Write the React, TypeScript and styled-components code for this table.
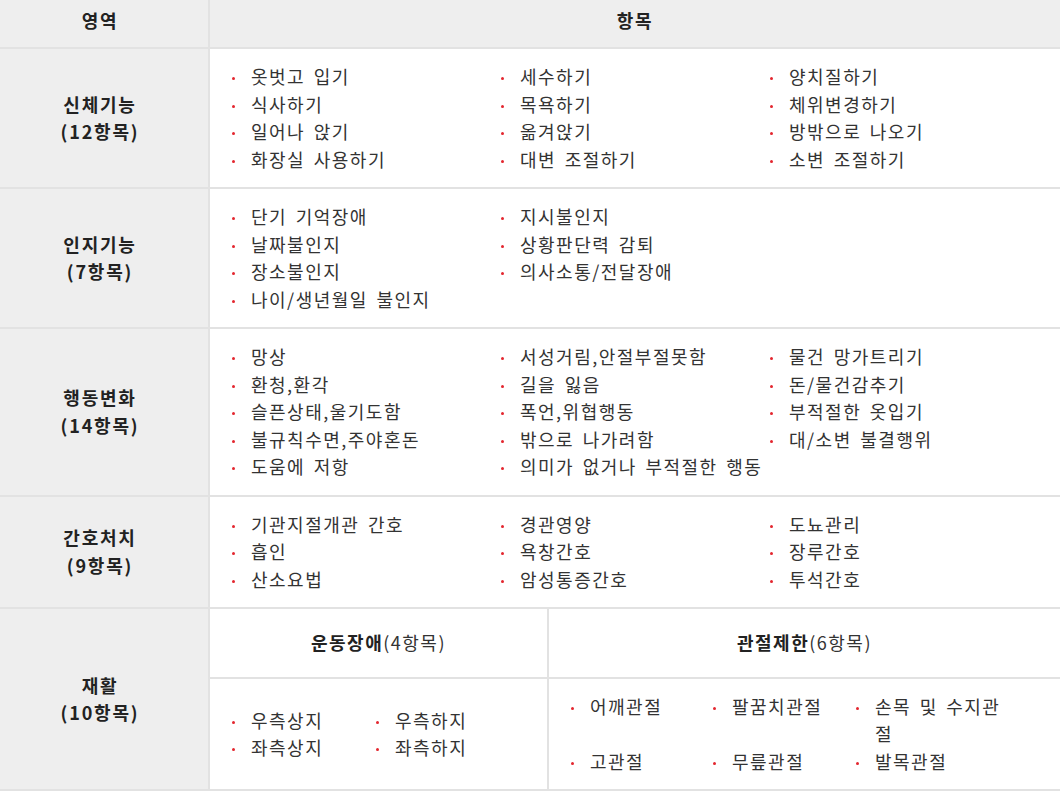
import React from 'react';
import styled, { createGlobalStyle } from 'styled-components';

const GlobalStyle = createGlobalStyle`
  html, body { margin: 0; padding: 0; background: #ffffff; }
  body {
    font-family: "Noto Sans CJK KR", "Noto Sans", sans-serif;
    color: #333333;
  }
  * { box-sizing: border-box; }
`;

const BORDER = '#e2e2e2';
const GRAY = '#eeeeee';

const Table = styled.div`
  width: 1060px;
  display: flex;
  flex-direction: column;
`;

const Row = styled.div`
  display: grid;
  grid-template-columns: 210px 1fr;
  border-bottom: 2px solid ${BORDER};
`;

const HeadCell = styled.div<{ $divider?: boolean }>`
  height: 47px;
  padding: 7px ${(p) => (p.$divider ? '8px' : '0')} 0 0;
  background: ${GRAY};
  text-align: center;
  font-size: 18px;
  line-height: 27px;
  font-weight: 700;
  letter-spacing: 1.8px;
  color: #222222;
  border-right: ${(p) => (p.$divider ? `2px solid ${BORDER}` : 'none')};
`;

const Label = styled.div`
  background: ${GRAY};
  border-right: 2px solid ${BORDER};
  padding-right: 8px;
  display: flex;
  flex-direction: column;
  align-items: center;
  justify-content: center;
  font-size: 18px;
  line-height: 27.5px;
  font-weight: 700;
  letter-spacing: 1.8px;
  color: #222222;
`;

const Content = styled.div`
  padding: 14px 0 14px 22px;
`;

const List = styled.ul<{ $cols: string }>`
  list-style: none;
  margin: 0;
  padding: 0;
  display: grid;
  grid-template-columns: ${(p) => p.$cols};
`;

const Item = styled.li<{ $wrap?: boolean }>`
  display: flex;
  align-items: flex-start;
  font-size: 18px;
  line-height: 27.5px;
  letter-spacing: 1.5px;
  word-spacing: 3px;
  color: #333333;
  white-space: ${(p) => (p.$wrap ? 'normal' : 'nowrap')};

  &::before {
    content: '';
    flex: none;
    width: 3px;
    height: 3px;
    border-radius: 50%;
    background: #e3262e;
    margin: 14px 16px 0 0;
  }
`;

const SubGrid = styled.div`
  display: grid;
  grid-template-columns: 339px 1fr;
  grid-template-rows: 70px 110px;
`;

const SubHead = styled.div<{ $divider?: boolean }>`
  display: flex;
  align-items: center;
  justify-content: center;
  border-bottom: 2px solid ${BORDER};
  border-right: ${(p) => (p.$divider ? `2px solid ${BORDER}` : 'none')};
  font-size: 18px;
  line-height: 27.5px;
  letter-spacing: 1.5px;
  color: #333333;

  b {
    font-weight: 700;
    color: #222222;
  }
`;

const SubBody = styled.div<{ $divider?: boolean }>`
  display: flex;
  align-items: center;
  padding-left: 22px;
  border-right: ${(p) => (p.$divider ? `2px solid ${BORDER}` : 'none')};
`;

type Section = { title: string; count: string; cols: number; items: string[] };

const sections: Section[] = [
  {
    title: '신체기능',
    count: '(12항목)',
    cols: 3,
    items: [
      '옷벗고 입기', '세수하기', '양치질하기',
      '식사하기', '목욕하기', '체위변경하기',
      '일어나 앉기', '옮겨앉기', '방밖으로 나오기',
      '화장실 사용하기', '대변 조절하기', '소변 조절하기',
    ],
  },
  {
    title: '인지기능',
    count: '(7항목)',
    cols: 2,
    items: [
      '단기 기억장애', '지시불인지',
      '날짜불인지', '상황판단력 감퇴',
      '장소불인지', '의사소통/전달장애',
      '나이/생년월일 불인지',
    ],
  },
  {
    title: '행동변화',
    count: '(14항목)',
    cols: 3,
    items: [
      '망상', '서성거림,안절부절못함', '물건 망가트리기',
      '환청,환각', '길을 잃음', '돈/물건감추기',
      '슬픈상태,울기도함', '폭언,위협행동', '부적절한 옷입기',
      '불규칙수면,주야혼돈', '밖으로 나가려함', '대/소변 불결행위',
      '도움에 저항', '의미가 없거나 부적절한 행동',
    ],
  },
  {
    title: '간호처치',
    count: '(9항목)',
    cols: 3,
    items: [
      '기관지절개관 간호', '경관영양', '도뇨관리',
      '흡인', '욕창간호', '장루간호',
      '산소요법', '암성통증간호', '투석간호',
    ],
  },
];

const movement = ['우측상지', '우측하지', '좌측상지', '좌측하지'];
const joints = ['어깨관절', '팔꿈치관절', '손목 및 수지관절', '고관절', '무릎관절', '발목관절'];

export default function App() {
  return (
    <>
      <GlobalStyle />
      <Table>
        <Row>
          <HeadCell $divider>영역</HeadCell>
          <HeadCell>항목</HeadCell>
        </Row>
        {sections.map((s) => (
          <Row key={s.title}>
            <Label>
              <span>{s.title}</span>
              <span>{s.count}</span>
            </Label>
            <Content>
              <List $cols={`repeat(${s.cols}, 269px)`}>
                {s.items.map((it) => (
                  <Item key={it}>{it}</Item>
                ))}
              </List>
            </Content>
          </Row>
        ))}
        <Row>
          <Label>
            <span>재활</span>
            <span>(10항목)</span>
          </Label>
          <SubGrid>
            <SubHead $divider>
              <b>운동장애</b>(4항목)
            </SubHead>
            <SubHead>
              <b>관절제한</b>(6항목)
            </SubHead>
            <SubBody $divider>
              <List $cols="144px 144px">
                {movement.map((it) => (
                  <Item key={it}>{it}</Item>
                ))}
              </List>
            </SubBody>
            <SubBody>
              <List $cols="142px 143px 154px">
                {joints.map((it) => (
                  <Item key={it} $wrap>
                    {it}
                  </Item>
                ))}
              </List>
            </SubBody>
          </SubGrid>
        </Row>
      </Table>
    </>
  );
}
